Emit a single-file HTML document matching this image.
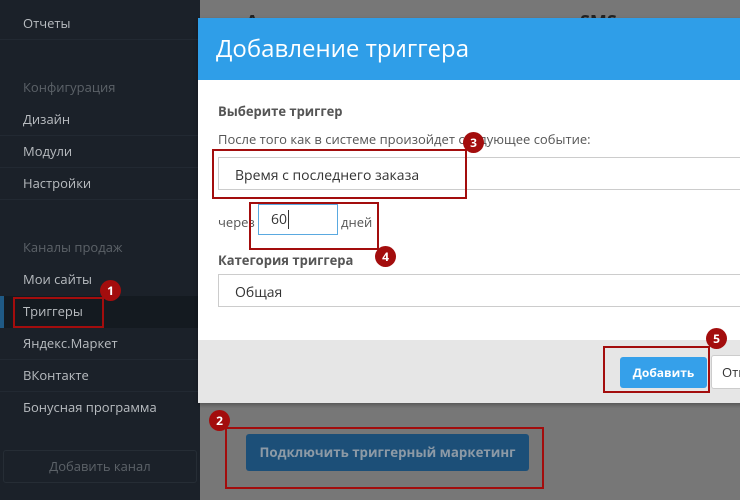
<!DOCTYPE html>
<html><head><meta charset="utf-8"><style>
*{margin:0;padding:0;box-sizing:border-box}
body{width:740px;height:500px;overflow:hidden;position:relative;background:#777;font-family:"Open Sans","Liberation Sans","DejaVu Sans",sans-serif;}
.sb{position:absolute;left:0;top:0;width:200px;height:500px;background:#1b2129}
.it{position:absolute;left:23px;font-size:13px;color:#b8bcc0;line-height:16px}
.hd{color:#5c6268}
.ln{position:absolute;left:0;width:200px;height:1px;background:#222932}
.act{position:absolute;left:0;top:296px;width:200px;height:32px;background:#141a20}
.bar{position:absolute;left:0;top:296px;width:4px;height:32px;background:#1f5a85}
.addc{position:absolute;left:3px;top:450px;width:194px;height:33px;border:1px solid #262d35;border-radius:3px;color:#5c6268;font-size:13px;text-align:center;line-height:31px}
.modal{position:absolute;left:198px;top:18px;width:560px;height:385px;background:#fff;box-shadow:0 2px 4px rgba(0,0,0,.3)}
.mh{height:62px;background:#2f9ee8;color:#fff;font-size:24px;line-height:62px;padding-left:18px}
.mf{position:absolute;left:0;top:322px;width:100%;height:63px;background:#e6e6e6}
.t{position:absolute;font-size:13px;color:#555}
.b{font-weight:bold}
.sel{position:absolute;left:20px;width:540px;height:33px;border:1px solid #ccc;font-size:14px;color:#333;line-height:35px;padding-left:16px}
.rb{position:absolute;border:2px solid #a30d0d}
.c{position:absolute;width:21px;height:21px;border-radius:50%;background:#a30d0d;color:#fff;font-size:12px;font-weight:bold;text-align:center;line-height:21px}
</style></head><body>
<div style="position:absolute;left:246px;top:10px;font-size:18px;font-weight:bold;color:#222">А</div>
<div style="position:absolute;left:580px;top:10px;font-size:18px;font-weight:bold;color:#222">SMS</div>
<div class="sb">
<div class="it" style="top:15px">Отчеты</div>
<div class="ln" style="top:39px"></div>
<div class="it hd" style="top:79px">Конфигурация</div>
<div class="it" style="top:111px">Дизайн</div>
<div class="ln" style="top:135px"></div>
<div class="it" style="top:143px">Модули</div>
<div class="ln" style="top:167px"></div>
<div class="it" style="top:175px">Настройки</div>
<div class="ln" style="top:199px"></div>
<div class="it hd" style="top:239px">Каналы продаж</div>
<div class="it" style="top:271px">Мои сайты</div>
<div class="act"></div><div class="bar"></div>
<div class="it" style="top:303px">Триггеры</div>
<div class="it" style="top:335px">Яндекс.Маркет</div>
<div class="ln" style="top:359px"></div>
<div class="it" style="top:367px">ВКонтакте</div>
<div class="ln" style="top:391px"></div>
<div class="it" style="top:399px">Бонусная программа</div>
<div class="addc">Добавить канал</div>
</div>
<div class="modal">
<div class="mh">Добавление триггера</div>
<div class="t b" style="left:20px;top:84px">Выберите триггер</div>
<div class="t" style="left:20px;top:112px">После того как в системе произойдет следующее событие:</div>
<div class="sel" style="top:139px">Время с последнего заказа</div>
<div class="t" style="left:20px;top:195px">через</div>
<div style="position:absolute;left:60px;top:186px;width:80px;height:31px;border:1px solid #5aa9e0;font-size:14px;color:#333;line-height:29px;padding-left:12px">60<span style="border-left:1px solid #333;margin-left:1px"></span></div>
<div class="t" style="left:143px;top:195px">дней</div>
<div class="t b" style="left:20px;top:233px">Категория триггера</div>
<div class="sel" style="top:256px">Общая</div>
<div class="mf">
<div style="position:absolute;left:422px;top:17px;width:87px;height:31px;background:#35a0ea;border-radius:3px;color:#fff;font-size:12px;font-weight:bold;text-align:center;line-height:31px">Добавить</div>
<div style="position:absolute;left:513px;top:15px;width:60px;height:34px;background:#fff;border:1px solid #ccc;border-radius:3px;color:#333;font-size:13px;line-height:32px;padding-left:10px">Отмена</div>
</div>
</div>
<div style="position:absolute;left:246px;top:434px;width:283px;height:37px;background:#1c4f78;border-radius:3px;color:#8d9aa6;font-size:13.3px;font-weight:bold;text-align:center;line-height:37px">Подключить триггерный маркетинг</div>
<div class="rb" style="left:13px;top:297px;width:91px;height:31px"></div>
<div class="rb" style="left:225px;top:427px;width:319px;height:62px"></div>
<div class="rb" style="left:212px;top:149px;width:255px;height:50px"></div>
<div class="rb" style="left:249px;top:202px;width:130px;height:48px"></div>
<div class="rb" style="left:603px;top:346px;width:107px;height:47px"></div>
<div class="c" style="left:100px;top:280px">1</div>
<div class="c" style="left:209px;top:410px">2</div>
<div class="c" style="left:463px;top:132px">3</div>
<div class="c" style="left:375px;top:246px">4</div>
<div class="c" style="left:706px;top:328px">5</div>
</body></html>
